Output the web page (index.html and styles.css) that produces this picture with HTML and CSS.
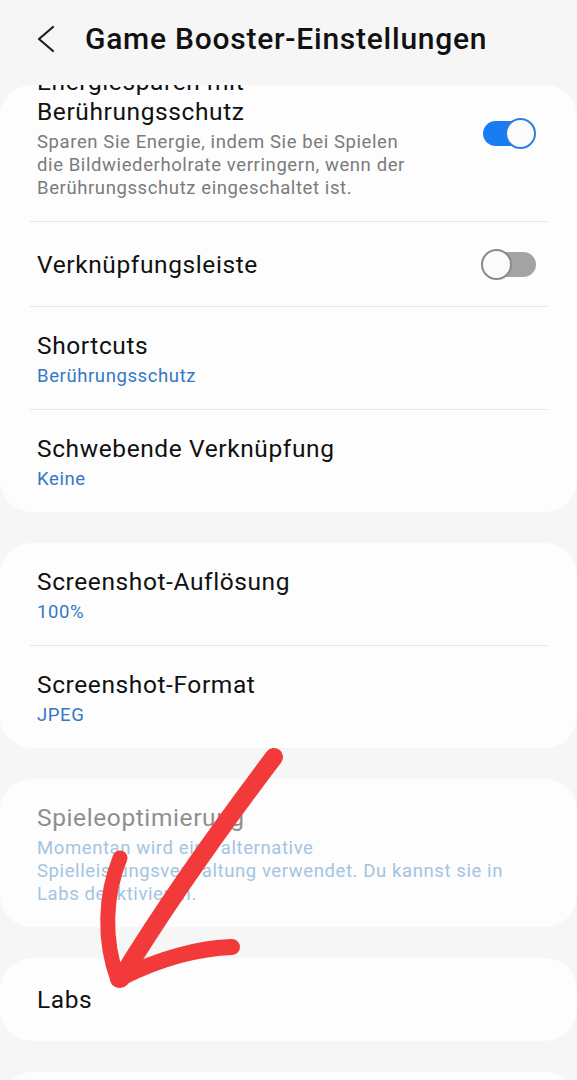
FILE: index.html
```html
<!DOCTYPE html>
<html lang="de">
<head>
    <meta charset="UTF-8">
    <meta name="viewport" content="width=device-width, initial-scale=1.0">
    <title>Game Booster-Einstellungen</title>
    <link rel="stylesheet" href="styles.css">
</head>
<body>
    <header class="topbar">
        <svg class="back" width="20" height="30" viewBox="0 0 20 30">
            <path d="M17 2 L3 14 L17 26" fill="none" stroke="#1c1c1c" stroke-width="2.2" stroke-linecap="round" stroke-linejoin="round"/>
        </svg>
        <h1>Game Booster-Einstellungen</h1>
    </header>

    <main class="list">
        <!-- Erste Gruppe, oben teilweise weggescrollt -->
        <section class="card">
            <div class="row row-scrolled">
                <div class="row-text narrow">
                    <div class="title">Energiesparen mit Berührungsschutz</div>
                    <div class="desc">Sparen Sie Energie, indem Sie bei Spielen die Bildwiederholrate verringern, wenn der Berührungsschutz eingeschaltet ist.</div>
                </div>
                <span class="switch on"></span>
            </div>
            <div class="row single">
                <div class="row-text narrow">
                    <div class="title">Verknüpfungsleiste</div>
                </div>
                <span class="switch"></span>
            </div>
            <div class="row">
                <div class="row-text">
                    <div class="title">Shortcuts</div>
                    <div class="value">Berührungsschutz</div>
                </div>
            </div>
            <div class="row">
                <div class="row-text">
                    <div class="title">Schwebende Verknüpfung</div>
                    <div class="value">Keine</div>
                </div>
            </div>
        </section>

        <section class="card">
            <div class="row">
                <div class="row-text">
                    <div class="title">Screenshot-Auflösung</div>
                    <div class="value">100%</div>
                </div>
            </div>
            <div class="row">
                <div class="row-text">
                    <div class="title">Screenshot-Format</div>
                    <div class="value">JPEG</div>
                </div>
            </div>
        </section>

        <section class="card disabled">
            <div class="row">
                <div class="row-text">
                    <div class="title">Spieleoptimierung</div>
                    <div class="value">Momentan wird eine alternative Spielleistungsverwaltung verwendet. Du kannst sie in Labs deaktivieren.</div>
                </div>
            </div>
        </section>

        <section class="card">
            <div class="row single">
                <div class="row-text">
                    <div class="title">Labs</div>
                </div>
            </div>
        </section>

        <!-- Nächste Gruppe, nur der obere Rand ist noch zu sehen -->
        <section class="card card-peek"></section>
    </main>

    <!-- Roter Pfeil, von Hand auf den Screenshot gemalt -->
    <svg class="scribble" width="577" height="1080" viewBox="0 0 577 1080">
        <g fill="none" stroke="#f23a3a" stroke-linecap="round" stroke-linejoin="round">
            <path d="M274 757 Q183 877 121 978" stroke-width="18"/>
            <path d="M120 858 C105 895 103 940 118 980" stroke-width="15"/>
            <path d="M232 947 C200 948 160 958 121 978" stroke-width="16"/>
        </g>
        <circle cx="120" cy="978" r="10" fill="#f23a3a"/>
    </svg>
</body>
</html>
```

FILE: styles.css
```css
body {
    margin: 0;
    background-color: #f6f6f6;
    font-family: Roboto, "Noto Sans", sans-serif;
    color: #111;
    height: 1080px;
    overflow: hidden;
    position: relative;
}

.topbar {
    height: 85px;
    display: flex;
    align-items: center;
    padding-left: 36px;
    box-sizing: border-box;
    padding-bottom: 8px;
}

.back {
    margin-top: 2px;
}

.topbar h1 {
    margin: 0 0 0 29px;
    font-size: 30px;
    font-weight: 500;
    letter-spacing: 0.75px;
    color: #111;
}

.list {
    display: flex;
    flex-direction: column;
    gap: 31px;
}

.card {
    background-color: #fdfdfd;
    border-radius: 32px;
    overflow: hidden;
}

.card-peek {
    height: 84px;
    flex: none;
}

.row {
    display: flex;
    align-items: center;
    margin: 0 30px;
    padding: 24px 11px 21px 7px;
    border-bottom: 1px solid #e6e6e6;
}

.row:last-child {
    border-bottom: none;
}

.row.single {
    padding-top: 27px;
    padding-bottom: 26px;
}

.row-scrolled {
    margin-top: -42px;
}

.row-text {
    flex: 1;
    display: flex;
    flex-direction: column;
    gap: 4px;
    padding-right: 20px;
}

.row-text.narrow {
    padding-right: 66px;
}

.title {
    font-size: 24.5px;
    line-height: 30px;
    letter-spacing: 0.6px;
    color: #111;
}

.desc, .value {
    font-size: 18.5px;
    line-height: 23px;
    letter-spacing: 0.6px;
}

.desc {
    color: #7b7b7b;
}

.value {
    color: #3478c4;
}

.disabled .title {
    color: #8f8f8f;
}

.disabled .value {
    color: #a3c4e2;
}

/* Schalter */
.switch {
    position: relative;
    flex: none;
    width: 55px;
    height: 31px;
}

.switch::before {
    content: "";
    position: absolute;
    left: 2px;
    right: 0;
    top: 3px;
    height: 25px;
    border-radius: 13px;
    background-color: #a3a3a3;
}

.switch::after {
    content: "";
    position: absolute;
    left: 0;
    top: 0;
    width: 27px;
    height: 27px;
    border-radius: 50%;
    background-color: #fbfbfb;
    border: 2px solid #8a8a8a;
}

.switch.on::before {
    background-color: #1a7cf2;
    right: 2px;
}

.switch.on::after {
    left: auto;
    right: 0;
    border-color: #2b7fe0;
}

.scribble {
    position: absolute;
    top: 0;
    left: 0;
    pointer-events: none;
}
```
